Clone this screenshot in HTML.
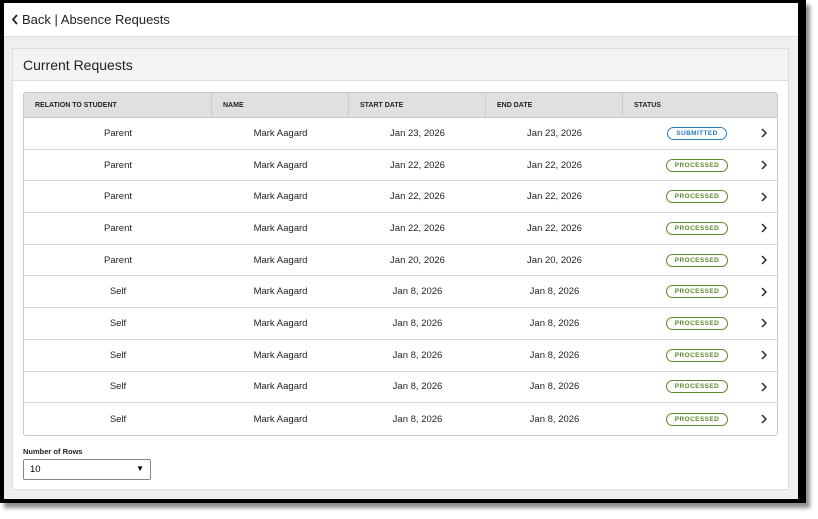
<!DOCTYPE html>
<html><head><style>
*{box-sizing:border-box;margin:0;padding:0}
body{width:818px;height:519px;background:#fff;font-family:"Liberation Sans",sans-serif;position:relative;overflow:hidden}
.frame{position:absolute;left:0;top:0;width:806px;height:503px;background:#000;box-shadow:4px 5px 4px rgba(0,0,0,.45)}
.inner{position:absolute;left:4px;top:3px;width:794px;height:496px;background:#efefef;overflow:hidden}
.top{height:34px;background:#fff;border-bottom:1px solid #ddd;font-size:13px;color:#222;padding:9px 0 0 7px}
.panel{position:absolute;left:8px;top:45px;width:777px;height:442px;background:#fff;border:1px solid #ddd}
.ph{height:32px;background:#f3f3f3;border-bottom:1px solid #ddd;font-size:14px;color:#222;padding:8px 0 0 10px}
table{position:absolute;left:10px;top:43px;width:755px;border-collapse:separate;border-spacing:0;border:1px solid #c8c8c8;border-radius:3px;font-size:9.5px;color:#222}
th{background:#e0e0e0;height:25px;text-align:left;font-size:7px;font-weight:bold;padding-left:11px;border-right:1px solid #ccc;border-bottom:1px solid #c8c8c8}
th:last-child{border-right:0}
td{height:31.7px;text-align:center;border-bottom:1px solid #d6d6d6}
tr:last-child td{border-bottom:0}
td.st{position:relative;padding-right:6px}
.b{display:inline-block;font-size:6.5px;font-weight:bold;border:1px solid;border-radius:8px;padding:2px 8px;letter-spacing:.4px}
.s{color:#2a7bc0;border-color:#2a7bc0}
.p{color:#5a8a2a;border-color:#5a8a2a}
.ch{position:absolute;right:10px;top:50%;margin-top:-5px;width:6px;height:10px}
.lab{position:absolute;left:10px;top:398px;font-size:7.5px;font-weight:bold;color:#222}
.sel{position:absolute;left:10px;top:410px;width:128px;height:21px;border:1px solid #888;border-radius:2px;font-size:9.5px;padding:4px 0 0 6px}
.sel span{position:absolute;right:6px;top:4px;font-size:8px}
</style></head><body>
<div class="frame"><div class="inner">
<div class="top"><svg width="8" height="11" viewBox="0 0 8 11" style="vertical-align:-1px;margin-right:3px"><path d="M6 1L2 5.5L6 10" fill="none" stroke="#222" stroke-width="1.8"/></svg>Back | Absence Requests</div>
<div class="panel">
<div class="ph">Current Requests</div>
<table>
<tr><th style="width:188px">RELATION TO STUDENT</th><th style="width:137px">NAME</th><th style="width:137px">START DATE</th><th style="width:137px">END DATE</th><th>STATUS</th></tr>
<tr><td>Parent</td><td>Mark Aagard</td><td>Jan 23, 2026</td><td>Jan 23, 2026</td><td class="st"><span class="b s">SUBMITTED</span><svg class="ch" viewBox="0 0 6 10"><path d="M1 1L5 5L1 9" fill="none" stroke="#222" stroke-width="1.4"/></svg></td></tr>
<tr><td>Parent</td><td>Mark Aagard</td><td>Jan 22, 2026</td><td>Jan 22, 2026</td><td class="st"><span class="b p">PROCESSED</span><svg class="ch" viewBox="0 0 6 10"><path d="M1 1L5 5L1 9" fill="none" stroke="#222" stroke-width="1.4"/></svg></td></tr>
<tr><td>Parent</td><td>Mark Aagard</td><td>Jan 22, 2026</td><td>Jan 22, 2026</td><td class="st"><span class="b p">PROCESSED</span><svg class="ch" viewBox="0 0 6 10"><path d="M1 1L5 5L1 9" fill="none" stroke="#222" stroke-width="1.4"/></svg></td></tr>
<tr><td>Parent</td><td>Mark Aagard</td><td>Jan 22, 2026</td><td>Jan 22, 2026</td><td class="st"><span class="b p">PROCESSED</span><svg class="ch" viewBox="0 0 6 10"><path d="M1 1L5 5L1 9" fill="none" stroke="#222" stroke-width="1.4"/></svg></td></tr>
<tr><td>Parent</td><td>Mark Aagard</td><td>Jan 20, 2026</td><td>Jan 20, 2026</td><td class="st"><span class="b p">PROCESSED</span><svg class="ch" viewBox="0 0 6 10"><path d="M1 1L5 5L1 9" fill="none" stroke="#222" stroke-width="1.4"/></svg></td></tr>
<tr><td>Self</td><td>Mark Aagard</td><td>Jan 8, 2026</td><td>Jan 8, 2026</td><td class="st"><span class="b p">PROCESSED</span><svg class="ch" viewBox="0 0 6 10"><path d="M1 1L5 5L1 9" fill="none" stroke="#222" stroke-width="1.4"/></svg></td></tr>
<tr><td>Self</td><td>Mark Aagard</td><td>Jan 8, 2026</td><td>Jan 8, 2026</td><td class="st"><span class="b p">PROCESSED</span><svg class="ch" viewBox="0 0 6 10"><path d="M1 1L5 5L1 9" fill="none" stroke="#222" stroke-width="1.4"/></svg></td></tr>
<tr><td>Self</td><td>Mark Aagard</td><td>Jan 8, 2026</td><td>Jan 8, 2026</td><td class="st"><span class="b p">PROCESSED</span><svg class="ch" viewBox="0 0 6 10"><path d="M1 1L5 5L1 9" fill="none" stroke="#222" stroke-width="1.4"/></svg></td></tr>
<tr><td>Self</td><td>Mark Aagard</td><td>Jan 8, 2026</td><td>Jan 8, 2026</td><td class="st"><span class="b p">PROCESSED</span><svg class="ch" viewBox="0 0 6 10"><path d="M1 1L5 5L1 9" fill="none" stroke="#222" stroke-width="1.4"/></svg></td></tr>
<tr><td>Self</td><td>Mark Aagard</td><td>Jan 8, 2026</td><td>Jan 8, 2026</td><td class="st"><span class="b p">PROCESSED</span><svg class="ch" viewBox="0 0 6 10"><path d="M1 1L5 5L1 9" fill="none" stroke="#222" stroke-width="1.4"/></svg></td></tr>
</table>
<div class="lab">Number of Rows</div>
<div class="sel">10<span>&#9660;</span></div>
</div>
</div></div>
</body></html>
